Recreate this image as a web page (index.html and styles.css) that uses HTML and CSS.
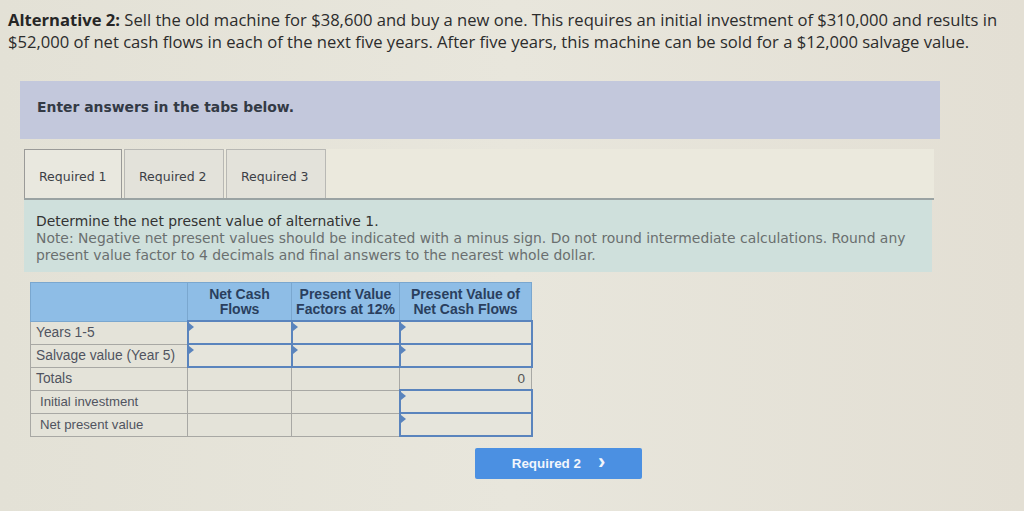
FILE: index.html
```html
<!DOCTYPE html>
<html>
<head>
<meta charset="utf-8">
<link rel="stylesheet" href="styles.css">
</head>
<body>
<div class="page">
  <p class="intro"><b>Alternative 2:</b> Sell the old machine for $38,600 and buy a new one. This requires an initial investment of $310,000 and results in $52,000 of net cash flows in each of the next five years. After five years, this machine can be sold for a $12,000 salvage value.</p>

  <div class="enter">Enter answers in the tabs below.</div>

  <div class="tabs">
    <div class="tab active">Required 1</div>
    <div class="tab">Required 2</div>
    <div class="tab">Required 3</div>
  </div>

  <div class="panel">
    <div class="q">Determine the net present value of alternative 1.</div>
    <div class="note">Note: Negative net present values should be indicated with a minus sign. Do not round intermediate calculations. Round any present value factor to 4 decimals and final answers to the nearest whole dollar.</div>
  </div>

  <table class="grid">
    <thead>
      <tr>
        <th class="c1"></th>
        <th class="c2">Net Cash<br>Flows</th>
        <th class="c3">Present Value<br>Factors at 12%</th>
        <th class="c4">Present Value of<br>Net Cash Flows</th>
      </tr>
    </thead>
    <tbody>
      <tr>
        <td class="lbl">Years 1-5</td>
        <td class="inp"></td>
        <td class="inp"></td>
        <td class="inp"></td>
      </tr>
      <tr>
        <td class="lbl">Salvage value (Year 5)</td>
        <td class="inp"></td>
        <td class="inp"></td>
        <td class="inp"></td>
      </tr>
      <tr>
        <td class="lbl">Totals</td>
        <td></td>
        <td></td>
        <td class="num">0</td>
      </tr>
      <tr>
        <td class="lbl ind">Initial investment</td>
        <td></td>
        <td></td>
        <td class="inp"></td>
      </tr>
      <tr>
        <td class="lbl ind">Net present value</td>
        <td></td>
        <td></td>
        <td class="inp"></td>
      </tr>
    </tbody>
  </table>

  <div class="nav">
    <div class="btn"><span>Required 2</span><span class="chev">&#8250;</span></div>
  </div>
</div>
</body>
</html>
```

FILE: styles.css
```css
html, body {
  margin: 0;
  padding: 0;
  background: #e5e2d8;
}
.page {
  width: 1024px;
  height: 511px;
  overflow: hidden;
  background: linear-gradient(90deg, #e3e1d6 0%, #e8e6dc 50%, #e3dfd4 100%);
}
.intro {
  margin: 0;
  padding: 9px 0 0 8px;
  font-family: "Open Sans", sans-serif;
  font-size: 16.6px;
  line-height: 22px;
  color: #2c2c2c;
}
.intro b {
  font-weight: 700;
  color: #262626;
}
.enter {
  margin: 28px 84px 0 20px;
  height: 58px;
  background: #c3c8dc;
  box-sizing: border-box;
  padding: 18px 0 0 17px;
  font-family: "DejaVu Sans", Verdana, sans-serif;
  font-weight: bold;
  font-size: 13.9px;
  color: #333a45;
}
.tabs {
  display: flex;
  margin: 10px 0 0 24px;
  width: 910px;
  border-bottom: 2px solid #9aa3a3;
  background: #ebe9dd;
}
.tab {
  height: 49px;
  box-sizing: border-box;
  border: 1px solid #b8b8b4;
  border-bottom: none;
  padding: 19px 0 0 14px;
  width: 100px;
  margin-right: 2px;
  font-family: "DejaVu Sans", Verdana, sans-serif;
  font-size: 12.5px;
  color: #3c3f46;
  background: #e3e2da;
}
.tab.active {
  width: 98px;
  background: #e9e8df;
  border-color: #9a9a98;
}
.panel {
  margin: 0 0 0 24px;
  width: 908px;
  height: 72px;
  background: #cfe0dc;
  box-sizing: border-box;
  padding: 13px 10px 0 12px;
  font-family: "DejaVu Sans", Verdana, sans-serif;
  font-size: 13.9px;
  line-height: 17px;
}
.q {
  color: #333;
}
.note {
  color: #6a6f6f;
}
.grid {
  margin: 10px 0 0 30px;
  border-collapse: collapse;
  font-family: "Liberation Sans", Arial, sans-serif;
  font-size: 13.4px;
  table-layout: fixed;
}
.grid th {
  background: #8ebde6;
  color: #2a3f5e;
  font-weight: bold;
  font-size: 14px;
  line-height: 15px;
  height: 37px;
  padding: 0;
  border: 1px solid #7aa7cf;
  vertical-align: middle;
  text-align: center;
}
.grid th.c1 { width: 156px; }
.grid th.c2 { width: 103px; }
.grid th.c3 { width: 107px; }
.grid th.c4 { width: 131px; }
.grid td {
  height: 23px;
  padding: 0;
  border: 1px solid #a8a8a4;
  background: #e4e3d9;
  box-sizing: border-box;
  position: relative;
}
.grid td.lbl {
  padding-left: 5px;
  color: #505460;
  font-size: 13.8px;
  white-space: nowrap;
}
.grid td.ind {
  padding-left: 9px;
  font-size: 13.2px;
}
.grid td.inp {
  border: 2px solid #5a84bd;
  background: #e6e5dc;
}
.grid td.inp::before {
  content: "";
  position: absolute;
  left: 0;
  top: 1px;
  border-left: 5px solid #5a84bd;
  border-top: 4px solid transparent;
  border-bottom: 4px solid transparent;
}
.grid td.num {
  text-align: right;
  padding-right: 6px;
  color: #555;
  font-size: 13.5px;
}
.nav {
  display: flex;
  margin: 11px 0 0 475px;
}
.btn {
  width: 167px;
  height: 31px;
  background: #4b90e2;
  border-radius: 2px;
  display: flex;
  align-items: center;
  justify-content: center;
  gap: 17px;
  color: #f2f6fc;
  font-family: "Liberation Sans", Arial, sans-serif;
  font-weight: bold;
  font-size: 13.4px;
  padding-left: 0;
  box-sizing: border-box;
}
.btn .chev {
  font-size: 22px;
  line-height: 20px;
  margin-top: -3px;
}
```
